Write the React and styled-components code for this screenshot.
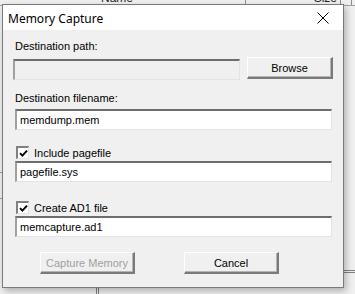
import React from 'react'
import styled, { createGlobalStyle } from 'styled-components'

const Global = createGlobalStyle`
  html, body {
    margin: 0;
    padding: 0;
    background: #f0f0f0;
    font-family: "Liberation Sans", Arial, sans-serif;
    font-size: 11px;
    color: #000;
    overflow: hidden;
  }
`

// the app sitting behind the dialog
const Desktop = styled.div`
  position: relative;
  width: 355px;
  height: 294px;
  overflow: hidden;
  background: #f0f0f0;
`

const Header = styled.div`
  display: flex;
  height: 14px;
  margin-top: -9px;
  border-bottom: 1px solid #a0a0a0;
  background: #f0f0f0;
`

const HeaderCell = styled.div`
  width: ${p => p.w}px;
  flex: none;
  box-sizing: border-box;
  border-right: ${p => (p.plain ? 'none' : '1px solid #8c8c8c')};
  padding: 0 3px;
  text-align: ${p => (p.right ? 'right' : 'left')};
  font-size: 12px;
  line-height: 14px;
  color: #222;
`

const Panes = styled.div`
  display: flex;
  height: 300px;
`

const LeftPane = styled.div`
  width: 96px;
  flex: none;
  border-right: 3px double #808080;
  display: flex;
  flex-direction: column;
`

const PaneLine = styled.div`
  height: ${p => p.h}px;
  flex: none;
  border-bottom: ${p => (p.double ? '3px double #808080' : '1px solid #9a9a9a')};
`

const RightPane = styled.div`
  flex: 1;
  display: flex;
  flex-direction: column;
`

// the dialog window
const Dialog = styled.div`
  position: absolute;
  left: 2px;
  top: 4px;
  width: 342px;
  height: 284px;
  box-sizing: border-box;
  border: 1px solid #7a7a7a;
  background: #f0f0f0;
  box-shadow: 2px 3px 7px rgba(0, 0, 0, 0.28);
  display: flex;
  flex-direction: column;
`

const TitleBar = styled.div`
  height: 25px;
  flex: none;
  background: #fff;
  display: flex;
  align-items: center;
  justify-content: space-between;
  padding-left: 5px;
`

const Title = styled.span`
  font-family: "Noto Sans", "Liberation Sans", sans-serif;
  font-size: 12px;
  margin-top: 1px;
`

const Close = styled.div`
  width: 30px;
  height: 25px;
  margin-right: 5px;
  display: flex;
  align-items: center;
  justify-content: center;
`

const Body = styled.div`
  padding: 9px 10px 0 10px;
  display: flex;
  flex-direction: column;
`

const Label = styled.div`
  height: 13px;
  line-height: 13px;
  margin-top: ${p => p.mt || 0}px;
  padding-left: 2px;
`

const Row = styled.div`
  display: flex;
  gap: 7px;
  margin-top: ${p => p.mt || 0}px;
`

const Input = styled.input`
  box-sizing: border-box;
  height: 21px;
  width: ${p => (p.w ? p.w + 'px' : '100%')};
  margin: ${p => p.mt || 0}px 0 0 ${p => p.ml || 0}px;
  padding: 0 0 0 3px;
  font-family: "Liberation Sans", Arial, sans-serif;
  font-size: 11px;
  color: #000;
  background: ${p => (p.disabled ? '#f0f0f0' : '#fff')};
  border-style: solid;
  border-width: 2px 1px 1px 2px;
  border-color: #6d6d6d #e3e3e3 #e3e3e3 #a0a0a0;
  outline: none;
`

const Button = styled.button`
  box-sizing: border-box;
  width: ${p => p.w}px;
  height: 22px;
  padding: 0;
  font-family: "Liberation Sans", Arial, sans-serif;
  font-size: 11px;
  color: ${p => (p.disabled ? '#a0a0a0' : '#000')};
  background: #f0f0f0;
  border-style: solid;
  border-width: 1px 2px 2px 1px;
  border-color: #fff #7a7a7a #7a7a7a #fff;
  box-shadow: inset -1px -1px 0 #b4b4b4;
  cursor: default;
`

const Check = styled.label`
  display: flex;
  align-items: center;
  gap: 5px;
  height: 13px;
  margin-top: ${p => p.mt || 0}px;
  padding-left: 3px;
`

const Box = styled.span`
  box-sizing: border-box;
  width: 13px;
  height: 13px;
  background: #fff;
  border-style: solid;
  border-width: 2px 1px 1px 2px;
  border-color: #808080 #e3e3e3 #e3e3e3 #808080;
  display: flex;
  align-items: center;
  justify-content: center;
`

const Footer = styled.div`
  display: flex;
  gap: 49px;
  padding-left: 27px;
  margin-top: 15px;
`

const CheckBox = ({ children, mt }) => (
  <Check mt={mt}>
    <Box>
      <svg width="9" height="9" viewBox="0 0 9 9">
        <path d="M1 4.2 L3.4 6.6 L8 1.6" fill="none" stroke="#000" strokeWidth="1.9" />
      </svg>
    </Box>
    {children}
  </Check>
)

export default function App() {
  return (
    <Desktop>
      <Global />
      <Header>
        <HeaderCell w={98} plain />
        <HeaderCell w={148}>Name</HeaderCell>
        <HeaderCell w={95} right>Size</HeaderCell>
        <HeaderCell w={11} />
      </Header>
      <Panes>
        <LeftPane>
          <PaneLine h={166} />
          <PaneLine h={25} />
        </LeftPane>
        <RightPane>
          <PaneLine h={264} double />
        </RightPane>
      </Panes>

      <Dialog>
        <TitleBar>
          <Title>Memory Capture</Title>
          <Close>
            <svg width="12" height="12" viewBox="0 0 12 12">
              <path d="M0.5 0.5 L11.5 11.5 M11.5 0.5 L0.5 11.5" stroke="#000" strokeWidth="1" />
            </svg>
          </Close>
        </TitleBar>
        <Body>
          <Label mt={1}>Destination path:</Label>
          <Row mt={4}>
            <Input w={227} mt={2} disabled />
            <Button w={86}>Browse</Button>
          </Row>
          <Label mt={12}>Destination filename:</Label>
          <Input mt={4} ml={2} w={317} defaultValue="memdump.mem" />
          <CheckBox mt={16}>Include pagefile</CheckBox>
          <Input mt={2} ml={2} w={317} defaultValue="pagefile.sys" />
          <CheckBox mt={19}>Create AD1 file</CheckBox>
          <Input mt={2} ml={2} w={317} defaultValue="memcapture.ad1" />
          <Footer>
            <Button w={95} disabled>Capture Memory</Button>
            <Button w={95}>Cancel</Button>
          </Footer>
        </Body>
      </Dialog>
    </Desktop>
  )
}
